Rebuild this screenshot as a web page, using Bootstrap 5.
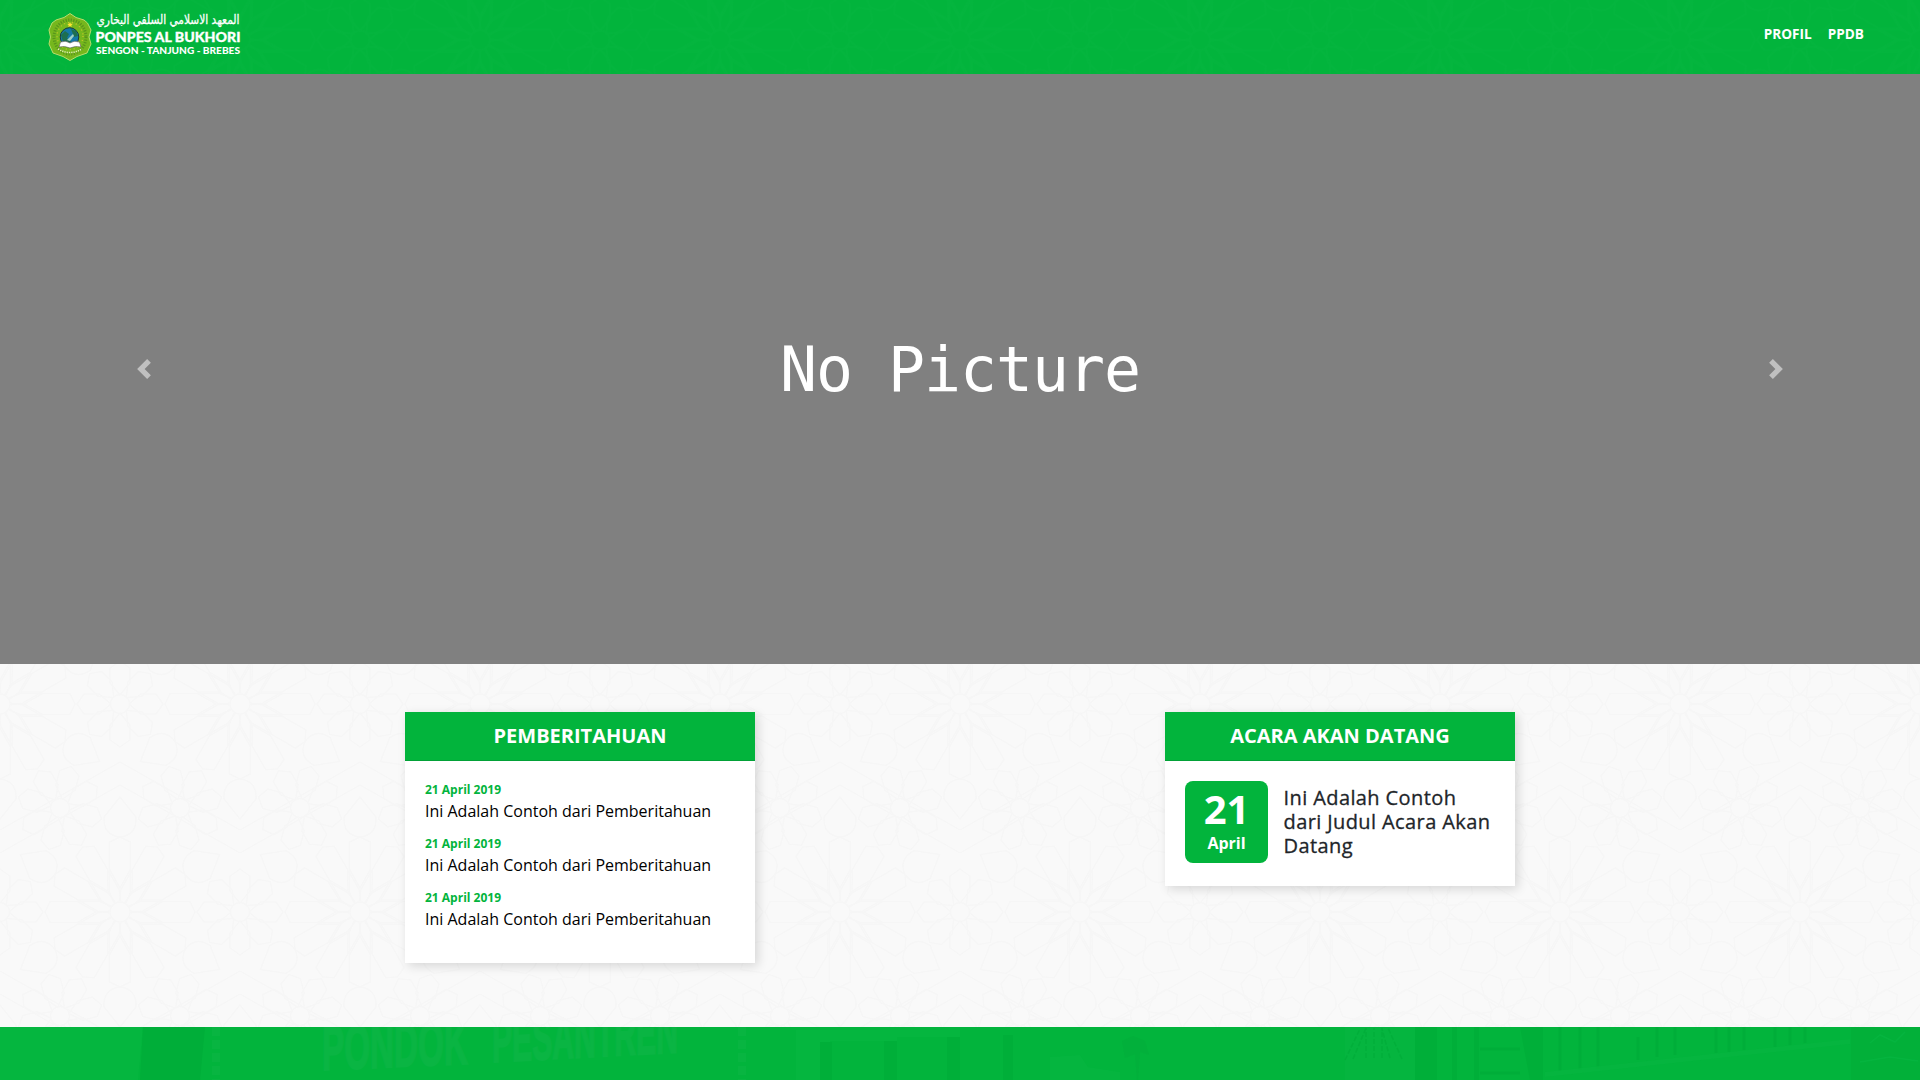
<!DOCTYPE html>
<html lang="id">
<head>
<meta charset="utf-8">
<meta name="viewport" content="width=device-width, initial-scale=1">
<title>Ponpes Al Bukhori</title>
<link href="https://cdn.jsdelivr.net/npm/bootstrap@5.3.0/dist/css/bootstrap.min.css" rel="stylesheet">
<style>
  :root { --brand: #02b43c; }
  body { font-family: "Open Sans", sans-serif; background: #f9f9f9; height: 100vh; overflow: hidden; }
  .site-header { height: 74px; background: var(--brand); padding: 0 48px; }
  .site-menu { padding-top: 24px; }
  .site-header .nav-link { color: #fff; font-size: 13.6px; font-weight: 700; line-height: 20px; padding: 0 8px; }
  .backdrop { position: absolute; inset: 0; width: 100%; height: 100%; }
  .brand-logo { display: block; overflow: visible; }
  .hero { height: 590px; background: #808080; }
  .hero-caption { font-family: "DejaVu Sans Mono", monospace; font-size: 61.5px; line-height: 70px; letter-spacing: -1.05px; padding-top: 2px; color: #fff; white-space: pre; }
  .hero .carousel-control-prev-icon, .hero .carousel-control-next-icon { width: 20px; height: 20px; background: none; }
  .info-area { height: 363px; background: #f9f9f9; padding-top: 48px; }
  .info-wrap { max-width: 1520px; }
  .info-card { width: 350px; border: 0; border-radius: 0; box-shadow: 3px 3px 10px rgba(0,0,0,.14); }
  .info-card .card-header { background: var(--brand); border-bottom: 1px solid #02a137; border-radius: 0; color: #fff; font-size: 20px; font-weight: 700; line-height: 24px; padding: 12px 20px; }
  .info-card .card-body { padding: 20px; color: #212529; }
  .notice-date { color: var(--brand); font-size: 12px; font-weight: 700; line-height: 18px; }
  .notice-text { color: #000; font-size: 16px; line-height: 24px; }
  .notice { margin-bottom: 12px; }
  .event-row { gap: 15.5px; }
  .event-date { width: 83px; height: 82px; margin-bottom: 3px; border-radius: 8px; background: var(--brand); color: #fff; font-weight: 700; }
  .event-day { font-size: 40px; line-height: 42px; padding-top: 7px; padding-bottom: 1px; }
  .event-month { font-size: 16px; line-height: 24px; }
  .event-title { font-size: 20px; font-weight: 500; line-height: 24px; margin: 5px 0 0; letter-spacing: .4px; white-space: nowrap; -webkit-text-stroke: .3px #212529; }
  .site-footer { height: 53px; background: var(--brand); }
</style>
</head>
<body>
<svg width="0" height="0" class="position-absolute" aria-hidden="true">
  <defs>
    <g id="ray"><path d="M10 0 24 0 43-10.5H70L75 0 70 10.5H43L24 0M9-6 20-10.5H45M9 6 20 10.5H45"/></g>
    <g id="kite"><path d="M115 0 95-16Q77-17 75 0 77 17 95 16Z"/></g>
    <g id="ray3"><use href="#ray"/><use href="#ray" transform="rotate(30)"/><use href="#ray" transform="rotate(60)"/></g>
    <g id="bigstar"><circle r="10"/>
      <use href="#ray3"/><use href="#ray3" transform="rotate(90)"/><use href="#ray3" transform="rotate(180)"/><use href="#ray3" transform="rotate(270)"/>
      <use href="#kite" transform="rotate(30)"/><use href="#kite" transform="rotate(90)"/><use href="#kite" transform="rotate(150)"/><use href="#kite" transform="rotate(210)"/><use href="#kite" transform="rotate(270)"/><use href="#kite" transform="rotate(330)"/>
    </g>
    <g id="leaf"><path d="M9 0 21-10 36-10 43 0 36 10 21 10Z"/></g>
    <g id="leaf2"><use href="#leaf"/><use href="#leaf" transform="rotate(45)"/></g>
    <g id="rosette"><circle r="9.5"/><use href="#leaf2"/><use href="#leaf2" transform="rotate(90)"/><use href="#leaf2" transform="rotate(180)"/><use href="#leaf2" transform="rotate(270)"/></g>
    <g id="tile" fill="none" stroke-width="1.4">
      <use href="#bigstar"/><use href="#bigstar" x="240"/><use href="#bigstar" y="416"/><use href="#bigstar" x="240" y="416"/><use href="#bigstar" x="120" y="208"/>
      <use href="#rosette" x="120"/><use href="#rosette" x="120" y="416"/><use href="#rosette" y="208"/><use href="#rosette" x="240" y="208"/>
      <use href="#rosette" transform="translate(60 104) rotate(15)"/><use href="#rosette" transform="translate(180 104) rotate(-15)"/>
      <use href="#rosette" transform="translate(60 312) rotate(-15)"/><use href="#rosette" transform="translate(180 312) rotate(15)"/>
      <path d="M0 126 120 58 240 126M0 149 120 81 240 149M0 290 120 358 240 290M0 267 120 335 240 267"/>
    </g>
    <pattern id="geo" width="240" height="416" patternUnits="userSpaceOnUse" patternTransform="translate(0 40)"><use href="#tile" stroke="#f6f6f6"/></pattern>
    <pattern id="geoGreen" width="240" height="416" patternUnits="userSpaceOnUse" patternTransform="translate(0 40)"><use href="#tile" stroke="#04b53e"/></pattern>
  </defs>
</svg>

<header class="site-header position-relative">
  <svg class="backdrop" aria-hidden="true"><rect width="100%" height="100%" fill="url(#geoGreen)"/></svg>
  <nav class="position-relative d-flex justify-content-between h-100">
    <a href="#" class="d-block" aria-label="Ponpes Al Bukhori">
      <svg class="brand-logo" width="194" height="74" viewBox="48 0 194 74">
        <path d="M70 13.5 76 17.5 84 20 87.500 23 91 30 89 37 91 44 87 53 77 56.500 70 60.500 63 56.500 53 53 49 44 50.500 37 49 30 52 23 56 20 64 17.500Z" fill="#76b71d" stroke="#b9dc6c" stroke-width="1"/>
        <ellipse cx="70" cy="37" rx="16" ry="17" fill="none" stroke="#41791c" stroke-width="3" stroke-dasharray="1.200 1.400" opacity=".55"/>
        <ellipse cx="70" cy="36" rx="13" ry="13.5" fill="none" stroke="#c9c42c" stroke-width="1.300" stroke-dasharray="1 3"/>
        <circle cx="69.500" cy="37" r="9.300" fill="#1478a8" stroke="#183b39"/>
        <path d="M61 35 65 31 69 34 67 38 71 41 69 45 63 42ZM71 29 76 31 78 36 74 37Z" fill="#1d6f50"/>
        <path d="M67 40 73 34 74 36 70 41Z" fill="#9ed0c8"/>
        <path d="M60.500 42Q66 40 70 43 74 40 79.500 42L81 47Q75 45.500 70 48 65 45.500 59 47Z" fill="#fff" stroke="#555" stroke-width=".6"/>
        <path d="M58 49Q70 56 82 49" fill="none" stroke="#dff0b0" stroke-width="1.500" stroke-dasharray="1.300 1"/>
        <path d="m70 22 .8 1.700 1.900.2-1.400 1.300.4 1.800-1.700-.9-1.700.9.400-1.800-1.400-1.300 1.900-.2Z" fill="#ffe533"/>
        <text x="168" y="23.600" text-anchor="middle" direction="rtl" font-family="DejaVu Sans, sans-serif" font-size="12.500" fill="#fff" stroke="#fff" stroke-width=".3" textLength="143" lengthAdjust="spacingAndGlyphs">المعهد الاسلامي السلفي البخاري</text>
        <text x="95.500" y="41.700" font-family="Lato, sans-serif" font-weight="900" font-size="13.100" fill="#fff" stroke="#fff" stroke-width=".3" textLength="145" lengthAdjust="spacingAndGlyphs">PONPES AL BUKHORI</text>
        <text x="96" y="54" font-family="Lato, sans-serif" font-weight="900" font-size="9.800" fill="#fff" textLength="144" lengthAdjust="spacingAndGlyphs">SENGON - TANJUNG - BREBES</text>
      </svg>
    </a>
    <ul class="nav site-menu align-self-start">
      <li class="nav-item"><a class="nav-link" href="#">PROFIL</a></li>
      <li class="nav-item"><a class="nav-link" href="#">PPDB</a></li>
    </ul>
  </nav>
</header>

<section id="hero" class="carousel slide hero">
  <div class="carousel-inner h-100">
    <div class="carousel-item active h-100">
      <div class="d-flex h-100 align-items-center justify-content-center"><span class="hero-caption">No Picture</span></div>
    </div>
  </div>
  <button class="carousel-control-prev" type="button" data-bs-target="#hero" data-bs-slide="prev" aria-label="Sebelumnya">
    <svg class="carousel-control-prev-icon" viewBox="0 0 8 8" fill="#fff"><path d="M5.250 0l-4 4 4 4 1.500-1.500L4.250 4l2.500-2.500L5.250 0z"/></svg>
  </button>
  <button class="carousel-control-next" type="button" data-bs-target="#hero" data-bs-slide="next" aria-label="Berikutnya">
    <svg class="carousel-control-next-icon" viewBox="0 0 8 8" fill="#fff"><path d="M2.750 0l-1.500 1.500L3.750 4l-2.500 2.500L2.750 8l4-4-4-4z"/></svg>
  </button>
</section>

<main class="info-area position-relative">
  <svg class="backdrop" aria-hidden="true"><rect width="100%" height="100%" fill="url(#geo)"/></svg>
  <div class="info-wrap container-fluid position-relative p-0">
    <div class="row g-0">
      <div class="col-6 d-flex justify-content-center align-items-start">
        <div class="card info-card">
          <div class="card-header text-center">PEMBERITAHUAN</div>
          <div class="card-body">
            <div class="notice"><div class="notice-date">21 April 2019</div><div class="notice-text">Ini Adalah Contoh dari Pemberitahuan</div></div>
            <div class="notice"><div class="notice-date">21 April 2019</div><div class="notice-text">Ini Adalah Contoh dari Pemberitahuan</div></div>
            <div class="notice"><div class="notice-date">21 April 2019</div><div class="notice-text">Ini Adalah Contoh dari Pemberitahuan</div></div>
          </div>
        </div>
      </div>
      <div class="col-6 d-flex justify-content-center align-items-start">
        <div class="card info-card">
          <div class="card-header text-center">ACARA AKAN DATANG</div>
          <div class="card-body event-row d-flex">
            <div class="event-date flex-shrink-0 text-center"><div class="event-day">21</div><div class="event-month">April</div></div>
            <h5 class="event-title">Ini Adalah Contoh<br>dari Judul Acara Akan<br>Datang</h5>
          </div>
        </div>
      </div>
    </div>
  </div>
</main>

<footer class="site-footer position-relative overflow-hidden">
  <svg class="backdrop" viewBox="0 0 1920 53" preserveAspectRatio="none" aria-hidden="true">
    <path d="M0 0H143L138 53H0Z" fill="#05b63f"/><path d="M143 0H205L200 53H140Z" fill="#00ae39"/>
    <path d="M216 0V53M742 0V53" stroke="#08b541" stroke-width="8" stroke-dasharray="9 4"/>
    <g fill="#0ab543" stroke="#0ab543" stroke-width="2" font-family="Liberation Sans, sans-serif" font-weight="700" font-size="62">
      <text transform="translate(322 43) skewY(-2.500)" textLength="146" lengthAdjust="spacingAndGlyphs">PONDOK</text>
      <text transform="translate(492 35) skewY(-3)" textLength="186" lengthAdjust="spacingAndGlyphs">PESANTREN</text>
    </g>
    <g opacity=".75">
    <path d="M796 3H960V53H950V10H897V53H886V14H830V53H796Z" fill="#06b740"/>
    <path d="M820 15H832V53H820ZM884 14H897V53H884ZM947 10H960V53H947ZM1003 8H1013V53H1003Z" fill="#00ae39"/>
    <path d="M1050 30 1080 28 1088 40 1120 45V53H1050ZM1345 53V0H1415V53Z" fill="#06b640"/>
    <path d="M1122 14 1133 9 1145 14 1149 28 1140 25 1138 53H1137L1135 27 1125 31Z" fill="#03af3b"/>
    <path d="M1345 33 1360 2M1353 32 1366 1M1366 31V1M1374 31V1M1382 31V1M1390 31 1382 2M1402 32 1388 1" fill="none" stroke="#02ad3a" stroke-width="1.500" stroke-dasharray="5 2"/>
    <path d="M1415 0H1437V53H1415ZM1452 0H1457V53H1452ZM1474 0H1479V53H1474ZM1520 0H1543V53H1530Z" fill="#00ae38"/>
    <path d="M1480 22H1520M1480 46H1520M1560 0V44M1580 0V43M1598 0V42M1638 10V33M1657 0V30M1675 0V28M1716 0V26M1729 0V25M1744 0V23M1775 0V20M1790 0V18M1805 0V16" stroke="#00ad38" stroke-width="3"/>
    <path d="M1545 50 1850 17V12L1545 45Z" fill="#08b642" opacity=".7"/>
    <path d="M1851 0H1920V53H1851Z" fill="#02af39"/>
    <path d="M1870 16 1880 8 1895 15 1905 5M1860 35 1890 30 1918 34" fill="none" stroke="#07b540" stroke-width="1.500"/>
    </g>
  </svg>
</footer>
<script src="https://cdn.jsdelivr.net/npm/bootstrap@5.3.0/dist/js/bootstrap.bundle.min.js"></script>
</body>
</html>
